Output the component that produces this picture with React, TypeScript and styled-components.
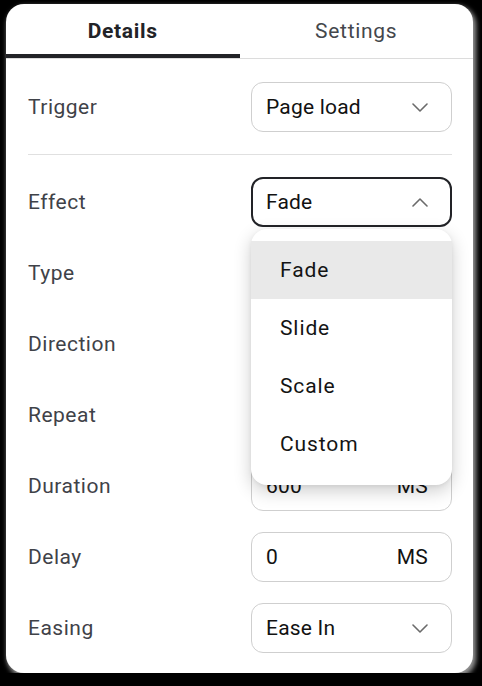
import React from 'react';
import styled, { createGlobalStyle, css } from 'styled-components';

const GlobalStyle = createGlobalStyle`
  html, body {
    margin: 0;
    padding: 0;
    background: #000;
  }
  body {
    font-family: Roboto, "Liberation Sans", sans-serif;
  }
`;

const Card = styled.div`
  width: 467px;
  margin: 4px 0 0 6px;
  background: #fff;
  border-radius: 18px;
  box-shadow: 2px 3px 5px 1px rgba(170, 170, 170, 0.9);
`;

const TabBar = styled.div`
  display: grid;
  grid-template-columns: 1fr 1fr;
  border-bottom: 1px solid #dcdcdc;
`;

const Tab = styled.div<{ $active?: boolean }>`
  box-sizing: border-box;
  height: 54px;
  padding-top: 3px;
  display: flex;
  align-items: center;
  justify-content: center;
  font-size: 21px;
  letter-spacing: 0.7px;
  color: ${p => (p.$active ? '#222327' : '#44474c')};
  font-weight: ${p => (p.$active ? 700 : 400)};
  border-bottom: 4px solid ${p => (p.$active ? '#222327' : 'transparent')};
`;

const Body = styled.div`
  padding: 23px 21px 20px 22px;
  display: flex;
  flex-direction: column;
  gap: 21px;
`;

const Row = styled.div`
  height: 50px;
  display: flex;
  align-items: center;
  justify-content: space-between;
`;

const Label = styled.span`
  font-size: 21px;
  letter-spacing: 0.5px;
  color: #3f4248;
`;

const Divider = styled.div`
  height: 1px;
  background: #e0e0e0;
  margin: 1px 0;
`;

const Anchor = styled.div`
  position: relative;
`;

const Field = styled.div<{ $open?: boolean }>`
  box-sizing: border-box;
  width: 201px;
  height: 50px;
  display: flex;
  align-items: center;
  justify-content: space-between;
  padding: 0 23px 0 14px;
  border-radius: 12px;
  font-size: 21px;
  letter-spacing: 0.2px;
  color: #121212;
  background: #fff;
  ${p =>
    p.$open
      ? css`
          border: 2px solid #222327;
          padding-left: 13px;
          padding-right: 22px;
        `
      : css`
          border: 1px solid #cfcfcf;
        `}
`;

const Menu = styled.div`
  position: absolute;
  top: calc(100% + 2px);
  left: 0;
  width: 201px;
  box-sizing: border-box;
  padding: 12px 0;
  background: #fff;
  border-radius: 16px;
  box-shadow: 0 6px 18px rgba(0, 0, 0, 0.2), 0 1px 4px rgba(0, 0, 0, 0.06);
  z-index: 5;
`;

const MenuItem = styled.div<{ $selected?: boolean }>`
  height: 58px;
  display: flex;
  align-items: center;
  padding-left: 29px;
  font-size: 21px;
  letter-spacing: 0.9px;
  color: #141414;
  background: ${p => (p.$selected ? '#e9e9e9' : 'transparent')};
`;

const Chevron: React.FC<{ up?: boolean }> = ({ up }) => (
  <svg width="16" height="9" viewBox="0 0 16 9" fill="none">
    <polyline
      points={up ? '1,8 8,1 15,8' : '1,1 8,8 15,1'}
      stroke="#6b6b6b"
      strokeWidth="1.6"
      strokeLinecap="round"
      strokeLinejoin="round"
    />
  </svg>
);

const options = ['Fade', 'Slide', 'Scale', 'Custom'];

const App: React.FC = () => {
  return (
    <>
      <GlobalStyle />
      <Card>
        <TabBar>
          <Tab $active>Details</Tab>
          <Tab>Settings</Tab>
        </TabBar>
        <Body>
          <Row>
            <Label>Trigger</Label>
            <Field>
              <span>Page load</span>
              <Chevron />
            </Field>
          </Row>
          <Divider />
          <Row>
            <Label>Effect</Label>
            <Anchor>
              <Field $open>
                <span>Fade</span>
                <Chevron up />
              </Field>
              <Menu>
                {options.map(o => (
                  <MenuItem key={o} $selected={o === 'Fade'}>
                    {o}
                  </MenuItem>
                ))}
              </Menu>
            </Anchor>
          </Row>
          <Row>
            <Label>Type</Label>
            <Field>
              <span>Ease In</span>
              <Chevron />
            </Field>
          </Row>
          <Row>
            <Label>Direction</Label>
            <Field>
              <span>Up</span>
              <Chevron />
            </Field>
          </Row>
          <Row>
            <Label>Repeat</Label>
            <Field>
              <span>Once</span>
              <Chevron />
            </Field>
          </Row>
          <Row>
            <Label>Duration</Label>
            <Field>
              <span>600</span>
              <span>MS</span>
            </Field>
          </Row>
          <Row>
            <Label>Delay</Label>
            <Field>
              <span>0</span>
              <span>MS</span>
            </Field>
          </Row>
          <Row>
            <Label>Easing</Label>
            <Field>
              <span>Ease In</span>
              <Chevron />
            </Field>
          </Row>
        </Body>
      </Card>
    </>
  );
};

export default App;
